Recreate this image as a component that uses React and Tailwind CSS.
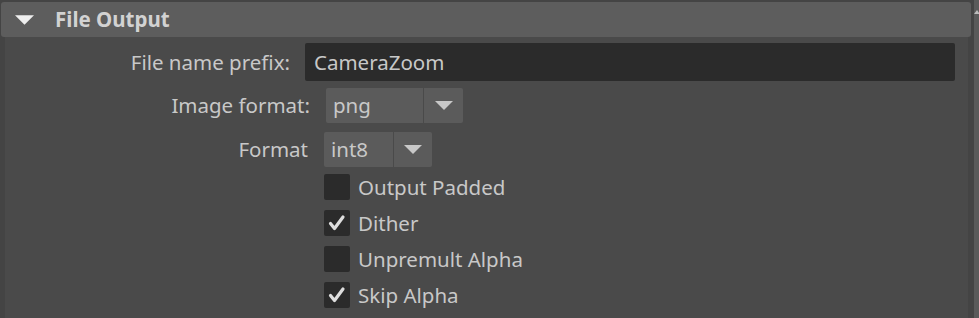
import React from "react";

const font = { fontFamily: '"Noto Sans", "Open Sans", sans-serif' };

function Caret({ className }) {
  return (
    <svg viewBox="0 0 18 9" className={className}>
      <path d="M0 0 H18 L9 9 Z" fill="currentColor" />
    </svg>
  );
}

function Check() {
  return (
    <svg viewBox="0 0 26 26" className="w-[26px] h-[26px]">
      <path d="M6.5 13.5 L10.5 18.5 L19 7" fill="none" stroke="#dedede" strokeWidth="3.2" strokeLinecap="round" strokeLinejoin="round" />
    </svg>
  );
}

function Dropdown({ value, width, split }) {
  return (
    <div className="flex h-[35px] rounded-[2px] bg-[#5b5b5b]" style={{ width }}>
      <div className="flex items-center pl-[7px] border-r border-[#4a4a4a]" style={{ width: split }}>
        {value}
      </div>
      <div className="flex-1 flex items-center justify-center">
        <Caret className="w-[18px] h-[9px] text-[#c8c8c8]" />
      </div>
    </div>
  );
}

function CheckRow({ label, checked }) {
  return (
    <div className="flex items-center h-[26px] mb-[10px] ml-[319px]">
      <div className="w-[26px] h-[26px] rounded-[2px] bg-[#2b2b2b]">{checked && <Check />}</div>
      <span className="ml-[8px]">{label}</span>
    </div>
  );
}

export default function App() {
  return (
    <div className="w-[979px] h-[318px] bg-[#444444] flex overflow-hidden text-[20.5px] leading-none text-[#c8c8c8]" style={font}>
      <div className="flex-1 flex flex-col">
        <div className="mt-[2px] ml-[1px] mr-[3px] h-[36px] rounded-[3px] bg-[#5d5d5d] flex items-center">
          <Caret className="ml-[14px] w-[19px] h-[10px] text-[#eeeeee]" />
          <span className="ml-[21px] font-bold text-[#d2d2d2] text-[20.5px]">File Output</span>
        </div>
        <div className="flex-1 ml-[5px] mr-[6px] bg-[#4a4a4a] pt-[6px]">
          <div className="flex items-center h-[38px]">
            <div className="w-[285px] text-right">File name prefix:</div>
            <div className="ml-[15px] w-[650px] h-[38px] rounded-[2px] bg-[#2b2b2b] flex items-center pl-[9px]">CameraZoom</div>
          </div>
          <div className="flex items-center mt-[7px]">
            <div className="w-[305px] text-right">Image format:</div>
            <div className="ml-[16px]"><Dropdown value="png" width={137} split={98} /></div>
          </div>
          <div className="flex items-center mt-[9px]">
            <div className="w-[303px] text-right">Format</div>
            <div className="ml-[16px]"><Dropdown value="int8" width={108} split={70} /></div>
          </div>
          <div className="mt-[7px]">
            <CheckRow label="Output Padded" />
            <CheckRow label="Dither" checked />
            <CheckRow label="Unpremult Alpha" />
            <CheckRow label="Skip Alpha" checked />
          </div>
        </div>
      </div>
      <div className="w-[5px] bg-[#5a5a5a] relative">
        <div className="absolute top-[10px] left-[0px] w-0 h-0 border-l-[3px] border-r-[3px] border-b-[4px] border-l-transparent border-r-transparent border-b-[#bbbbbb]" />
      </div>
    </div>
  );
}
